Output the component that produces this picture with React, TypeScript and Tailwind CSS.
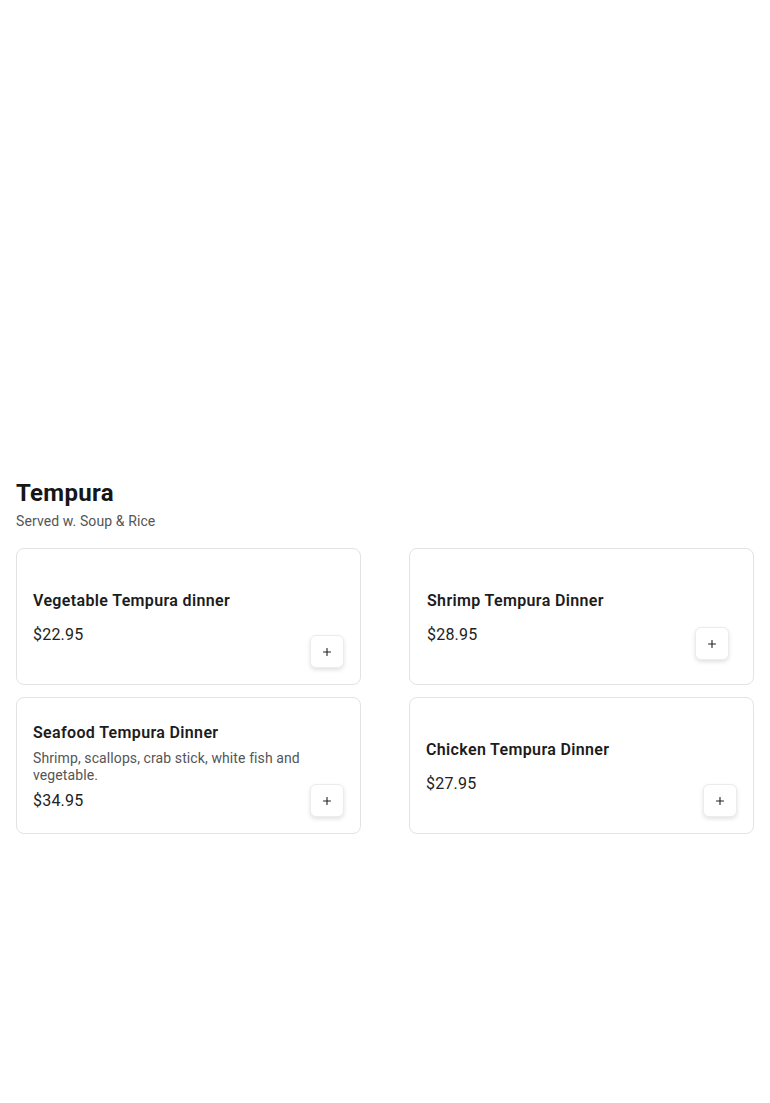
import { Plus } from "lucide-react";

type Item = {
  name: string;
  price: string;
  desc?: string;
  pad: string;
  btn: string;
};

const items: Item[] = [
  { name: "Vegetable Tempura dinner", price: "$22.95", pad: "pl-4", btn: "right-4 bottom-4" },
  { name: "Shrimp Tempura Dinner", price: "$28.95", pad: "pl-[17px]", btn: "right-6 bottom-6" },
  {
    name: "Seafood Tempura Dinner",
    price: "$34.95",
    desc: "Shrimp, scallops, crab stick, white fish and vegetable.",
    pad: "pl-4",
    btn: "right-4 bottom-4",
  },
  { name: "Chicken Tempura Dinner", price: "$27.95", pad: "pl-4", btn: "right-4 bottom-4" },
];

function MenuCard({ item }: { item: Item }) {
  return (
    <div
      className={`relative h-[137px] flex flex-col justify-center rounded-lg border border-[#e3e3e3] bg-white pt-[2px] pr-4 ${item.pad}`}
    >
      <h3
        className={`text-base leading-6 font-semibold tracking-[0.35px] text-[#1c1c1c] ${
          item.desc ? "mb-[5px]" : "mb-[10px]"
        }`}
      >
        {item.name}
      </h3>
      {item.desc && (
        <p className="text-sm leading-[17px] tracking-[0.1px] text-[#555] mb-[5px]">{item.desc}</p>
      )}
      <span className="text-base leading-6 font-normal tracking-[0.2px] text-[#222]">{item.price}</span>
      {/* add button floats over the bottom-right corner */}
      <button
        className={`absolute ${item.btn} w-[34px] h-[33px] flex items-center justify-center rounded-md bg-white border border-[#ececec] shadow-[0_2px_4px_rgba(0,0,0,0.12)]`}
      >
        <Plus size={12} strokeWidth={2.2} className="text-[#222]" />
      </button>
    </div>
  );
}

export default function App() {
  return (
    <div className="min-h-[1103px] bg-white px-4 pt-[477px] font-['Roboto',sans-serif]">
      <h2 className="text-2xl leading-8 font-bold tracking-[0.3px] text-[#161616]">Tempura</h2>
      <p className="mt-[2px] text-sm leading-5 tracking-[0.1px] text-[#555]">Served w. Soup &amp; Rice</p>
      <div className="mt-[17px] grid grid-cols-2 gap-x-12 gap-y-3">
        {items.map((it) => (
          <MenuCard key={it.name} item={it} />
        ))}
      </div>
    </div>
  );
}
